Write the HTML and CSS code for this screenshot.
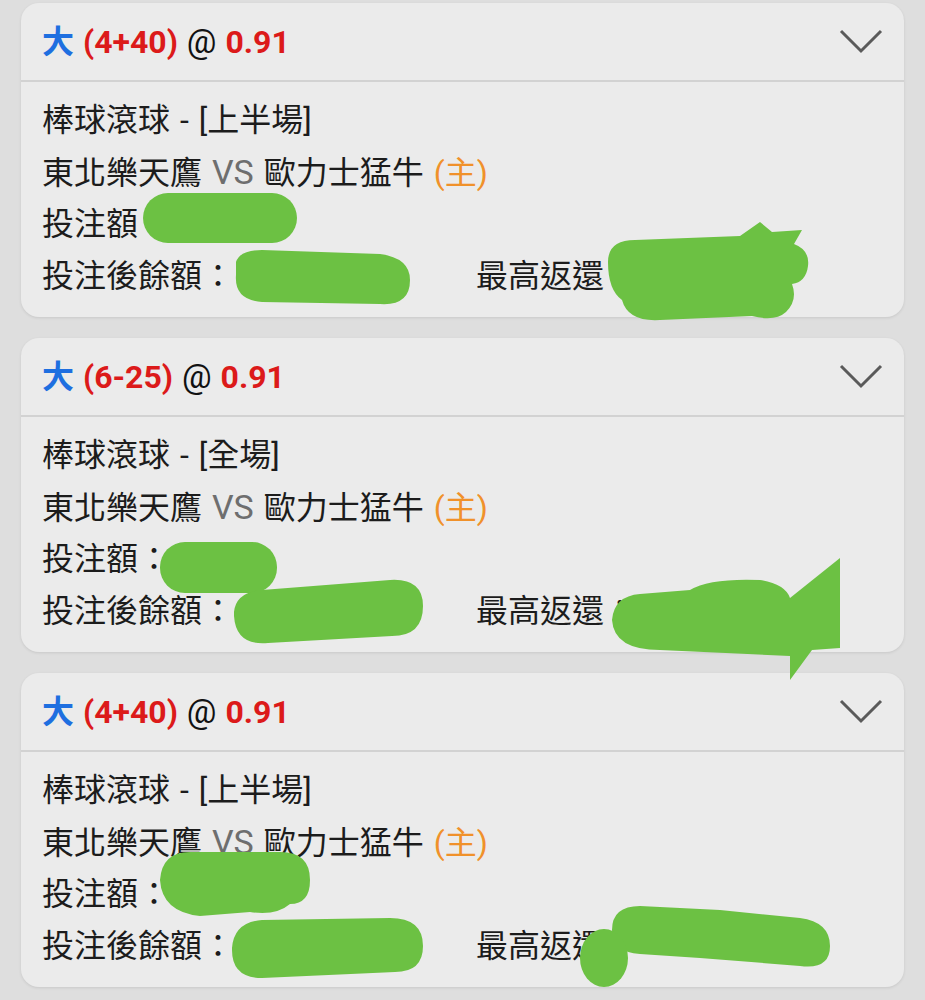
FILE: index.html
```html
<!DOCTYPE html>
<html lang="zh-Hant">
<head>
<meta charset="utf-8">
<link rel="stylesheet" href="styles.css">
</head>
<body>
<div class="list">
  <section class="card">
    <header class="card-head">
      <div class="title"><span class="big">大</span> <span class="red">(4+40)</span> <span class="at">@</span> <span class="red">0.91</span></div>
      <svg class="chev" viewBox="0 0 44 26"><path d="M2 2 L22 22 L42 2" /></svg>
    </header>
    <div class="card-body">
      <div class="line">棒球滾球 - [上半場]</div>
      <div class="line">東北樂天鷹 <span class="vs">VS</span> 歐力士猛牛 <span class="home">(主)</span></div>
      <div class="line">投注額</div>
      <div class="line row"><span class="col">投注後餘額：</span><span class="col2">最高返還</span></div>
    </div>
  </section>
  <section class="card">
    <header class="card-head">
      <div class="title"><span class="big">大</span> <span class="red">(6-25)</span> <span class="at">@</span> <span class="red">0.91</span></div>
      <svg class="chev" viewBox="0 0 44 26"><path d="M2 2 L22 22 L42 2" /></svg>
    </header>
    <div class="card-body">
      <div class="line">棒球滾球 - [全場]</div>
      <div class="line">東北樂天鷹 <span class="vs">VS</span> 歐力士猛牛 <span class="home">(主)</span></div>
      <div class="line">投注額：</div>
      <div class="line row"><span class="col">投注後餘額：</span><span class="col2">最高返還：</span></div>
    </div>
  </section>
  <section class="card">
    <header class="card-head">
      <div class="title"><span class="big">大</span> <span class="red">(4+40)</span> <span class="at">@</span> <span class="red">0.91</span></div>
      <svg class="chev" viewBox="0 0 44 26"><path d="M2 2 L22 22 L42 2" /></svg>
    </header>
    <div class="card-body">
      <div class="line">棒球滾球 - [上半場]</div>
      <div class="line">東北樂天鷹 <span class="vs">VS</span> 歐力士猛牛 <span class="home">(主)</span></div>
      <div class="line">投注額：</div>
      <div class="line row"><span class="col">投注後餘額：</span><span class="col2">最高返還：</span></div>
    </div>
  </section>
</div>
<svg class="scribble" viewBox="0 0 925 1000" width="925" height="1000">
  <g fill="#6cc143">
    <rect x="143" y="193" width="154" height="50" rx="25"/>
    <path d="M236 262 Q240 250 262 250 L380 254 Q410 258 410 280 Q410 306 380 304 L262 302 Q234 300 236 275 Z"/>
    <path d="M608 262 Q608 240 635 240 L740 236 L760 222 L772 232 L802 230 L794 244 Q810 250 808 266 Q806 282 792 284 Q798 300 786 312 Q775 322 752 316 L660 320 Q628 322 622 300 Q608 290 608 262 Z"/>
    <rect x="160" y="542" width="117" height="51" rx="25"/>
    <path d="M234 612 Q236 592 262 590 L390 580 Q423 578 423 606 Q423 636 392 636 L268 643 Q236 646 234 616 Z"/>
    <path d="M612 620 Q614 596 640 594 L690 590 Q710 578 760 580 Q785 584 790 598 L840 558 L840 648 L812 650 L790 680 L790 656 L660 650 Q614 650 612 620 Z"/>
    <path d="M160 880 Q162 852 190 852 L280 852 Q310 852 310 880 Q310 904 290 904 Q276 916 250 912 L200 916 Q162 912 160 880 Z"/>
    <path d="M232 948 Q234 922 262 920 L390 918 Q423 918 423 946 Q423 972 395 972 L262 978 Q232 978 232 950 Z"/>
    <path d="M612 930 Q612 906 640 906 L720 910 L800 918 Q830 922 830 946 Q830 970 800 966 L700 958 L640 954 Q612 952 612 930 Z"/>
    <ellipse cx="604" cy="958" rx="24" ry="29"/>
  </g>
</svg>
</body>
</html>
```

FILE: styles.css
```css
html, body {
  margin: 0;
  padding: 0;
  background: #dedede;
}
body {
  position: relative;
  width: 925px;
  height: 1000px;
  overflow: hidden;
  font-family: Roboto, "Noto Sans CJK TC", "Noto Sans", sans-serif;
  color: #1c1c1c;
}
.list {
  display: flex;
  flex-direction: column;
  gap: 21px;
  padding: 3px 21px 0 21px;
}
.card {
  background: #ebebeb;
  border-radius: 18px;
  box-shadow: 0 1px 3px rgba(0,0,0,0.10);
  overflow: hidden;
}
.card-head {
  display: flex;
  align-items: center;
  justify-content: space-between;
  padding: 0 21px 0 21px;
  border-bottom: 2px solid #d2d2d2;
  box-sizing: border-box;
  height: 79px;
}
.title {
  font-size: 32px;
  line-height: 1;
  margin-top: 0;
  white-space: pre;
  word-spacing: 1px;
}
.big {
  color: #1e6fe0;
  font-weight: 700;
}
.red {
  color: #dc1a1a;
  font-weight: 700;
}
.at {
  color: #111;
  font-size: 33px;
}
.chev {
  width: 44px;
  height: 26px;
}
.chev path {
  fill: none;
  stroke: #5a5a5a;
  stroke-width: 3;
}
.card-body {
  padding: 12px 21px 15px 21px;
}
.line {
  font-size: 32px;
  line-height: 52px;
  height: 52px;
  white-space: nowrap;
  word-spacing: 2px;
}
.vs {
  color: #6e6e6e;
  font-size: 34px;
}
.home {
  color: #f0912a;
}
.row {
  display: flex;
}
.col {
  width: 434px;
}
.scribble {
  position: absolute;
  left: 0;
  top: 0;
  pointer-events: none;
}
```
